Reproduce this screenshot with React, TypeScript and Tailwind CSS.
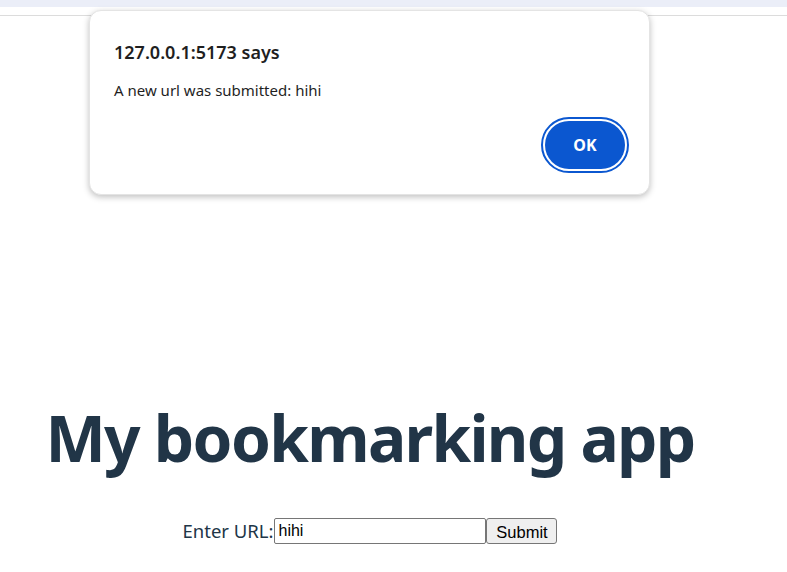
import { FC } from "react";

const App: FC = () => {
  return (
    <div className="relative w-[787px] h-[572px] overflow-hidden bg-white" style={{ fontFamily: "'Noto Sans', 'Open Sans', sans-serif" }}>
      {/* browser strip */}
      <div className="h-[7px] bg-[#ebeef8]" />
      <div className="h-[9px] bg-white border-b border-[#dcdcdc]" />

      {/* page */}
      <div className="w-[740px] pt-[387px] text-center text-[#213547]">
        <h1 className="text-[64px] leading-[1.1] font-bold tracking-[-1.7px]">My bookmarking app</h1>
        <form className="mt-[45px] flex items-center justify-center text-[18.5px] leading-[26px]">
          <label className="pr-px">Enter URL:</label>
          <input
            defaultValue="hihi"
            className="w-[212px] h-[26px] border border-[#767676] rounded-[2px] px-[3px] text-[16px] text-black"
            style={{ fontFamily: "'Liberation Sans', Arial, sans-serif" }}
          />
          <button
            type="button"
            className="h-[26px] w-[71px] border border-[#767676] rounded-[3px] bg-[#efefef] text-[16.5px] text-black"
            style={{ fontFamily: "'Liberation Sans', Arial, sans-serif" }}
          >
            Submit
          </button>
        </form>
      </div>

      {/* alert dialog */}
      <div className="absolute left-[89px] top-[10px] w-[561px] h-[185px] rounded-[12px] bg-white border border-[#e4e4e4] shadow-[0_2px_6px_rgba(0,0,0,0.25)] pl-[24px] pr-[20px] pt-[28px]">
        <div className="text-[18px] leading-[26px] font-semibold text-[#1f1f1f]">127.0.0.1:5173 says</div>
        <div className="mt-[15px] text-[15px] leading-[20px] text-[#1f1f1f]">A new url was submitted: hihi</div>
        <div className="flex justify-end mt-[17px]">
          <div className="w-[88px] h-[56px] rounded-full border-[2px] border-[#0b57d0] p-[2px] flex">
            <button className="flex-1 rounded-full bg-[#0b57d0] text-white text-[16px] font-bold">OK</button>
          </div>
        </div>
      </div>
    </div>
  );
};

export default App;
